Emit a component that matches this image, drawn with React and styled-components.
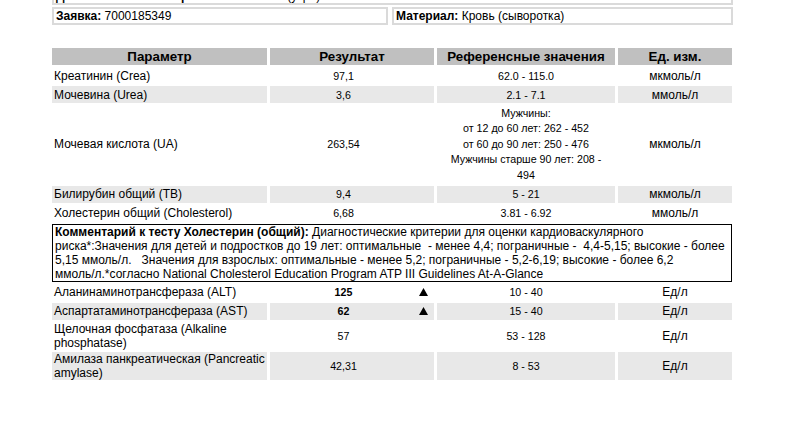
import React from 'react';
import styled, { createGlobalStyle } from 'styled-components';

const Global = createGlobalStyle`
  html, body { margin: 0; padding: 0; background: #fff; }
  body { font-family: "Liberation Sans", Arial, sans-serif; color: #000; }
`;

const Page = styled.div`
  width: 686px;
  padding-left: 49px;
`;

const InfoGrid = styled.div`
  display: grid;
  grid-template-columns: 336px 341px;
  column-gap: 4px;
  row-gap: 2px;
  margin: -13px 3px 0 3px;
`;

const InfoBox = styled.div`
  grid-column: ${(p) => (p.$wide ? '1 / span 2' : 'auto')};
  border: 2px solid #dadada;
  height: 14px;
  padding: 0 2px;
  font-size: 12px;
  line-height: 14px;
  white-space: nowrap;
  overflow: hidden;
`;

const Label = styled.b`
  font-weight: bold;
`;

const NoWrap = styled.span`
  white-space: nowrap;
`;

const Table = styled.table`
  margin-top: 21px;
  border-collapse: separate;
  border-spacing: 3px 2px;
  width: 686px;
  table-layout: fixed;
`;

const Th = styled.th`
  background: #c0c0c0;
  font-size: 13.33px;
  font-weight: bold;
  line-height: 15px;
  padding: 1px 2px;
  text-align: center;
`;

const Td = styled.td`
  background: ${(p) => (p.$shaded ? '#e8e8e8' : '#fff')};
  height: 17px;
  padding: 0 2px;
  vertical-align: middle;
  text-align: ${(p) => (p.$left ? 'left' : 'center')};
  font-size: ${(p) => (p.$small ? '10.67px' : '12px')};
  line-height: 14px;
`;

const ValueWrap = styled.div`
  display: flex;
  align-items: center;
`;

const Value = styled.span`
  flex: 1;
  text-align: center;
  font-weight: ${(p) => (p.$bold ? 'bold' : 'normal')};
`;

const Flag = styled.span`
  width: 17px;
  height: 13px;
  display: flex;
  align-items: center;
  justify-content: center;
`;

const RefLines = styled.div`
  max-width: 160px;
  margin: 0 auto;
  padding: 0.5px 0;
  line-height: 15.6px;
`;

const CommentCell = styled.td`
  border: 1px solid #000;
  padding: 0 2px;
  font-size: 12px;
  line-height: 14px;
  text-align: left;
  white-space: pre-wrap;
`;

const UpArrow = () => (
  <svg width="9" height="8" viewBox="0 0 9 8" aria-hidden="true">
    <polygon points="4.5,0 9,8 0,8" fill="#000" />
  </svg>
);

const rows = [
  { name: 'Креатинин (Crea)', value: '97,1', ref: '62.0 - 115.0', unit: 'мкмоль/л' },
  { name: 'Мочевина (Urea)', value: '3,6', ref: '2.1 - 7.1', unit: 'ммоль/л' },
  {
    name: 'Мочевая кислота (UA)',
    value: '263,54',
    refLines: ['Мужчины:', 'от 12 до 60 лет: 262 - 452', 'от 60 до 90 лет: 250 - 476', 'Мужчины старше 90 лет: 208 - 494'],
    unit: 'мкмоль/л',
  },
  { name: 'Билирубин общий (TB)', value: '9,4', ref: '5 - 21', unit: 'мкмоль/л' },
  { name: 'Холестерин общий (Cholesterol)', value: '6,68', ref: '3.81 - 6.92', unit: 'ммоль/л' },
];

const rows2 = [
  { name: 'Аланинаминотрансфераза (ALT)', value: '125', high: true, ref: '10 - 40', unit: 'Ед/л' },
  { name: 'Аспартатаминотрансфераза (AST)', value: '62', high: true, ref: '15 - 40', unit: 'Ед/л' },
  { name: 'Щелочная фосфатаза (Alkaline phosphatase)', value: '57', ref: '53 - 128', unit: 'Ед/л' },
  { name: 'Амилаза панкреатическая (Pancreatic amylase)', value: '42,31', ref: '8 - 53', unit: 'Ед/л' },
];

const commentA =
  'Диагностические критерии для оценки кардиоваскулярного риска*:Значения для детей и подростков до 19 лет: оптимальные  - менее 4,4; пограничные -  4,4-5,15; высокие - более 5,15 ммоль/л.   Значения для взрослых: оптимальные - менее 5,2; пограничные - 5,2-6,19; высокие - более 6,2 ';
const commentB = 'ммоль/л.*согласно';
const commentC = ' National Cholesterol Education Program ATP III Guidelines At-A-Glance';

function ResultRow({ row, shaded }) {
  return (
    <tr>
      <Td $left $shaded={shaded}>{row.name}</Td>
      <Td $small $shaded={shaded}>
        <ValueWrap>
          <Value $bold={row.high}>{row.value}</Value>
          <Flag>{row.high ? <UpArrow /> : null}</Flag>
        </ValueWrap>
      </Td>
      <Td $small $shaded={shaded}>
        {row.refLines ? (
          <RefLines>
            {row.refLines.map((l) => (
              <div key={l}>{l}</div>
            ))}
          </RefLines>
        ) : (
          row.ref
        )}
      </Td>
      <Td $shaded={shaded}>{row.unit}</Td>
    </tr>
  );
}

export default function App() {
  return (
    <>
      <Global />
      <Page>
        <InfoGrid>
          <InfoBox $wide>
            <Label>Дата взятия биоматериала:</Label> 14.06.2023 (утро)
          </InfoBox>
          <InfoBox>
            <Label>Заявка:</Label> 7000185349
          </InfoBox>
          <InfoBox>
            <Label>Материал:</Label> Кровь (сыворотка)
          </InfoBox>
        </InfoGrid>
        <Table>
          <colgroup>
            <col style={{ width: 215 }} />
            <col style={{ width: 164 }} />
            <col style={{ width: 178 }} />
            <col style={{ width: 114 }} />
          </colgroup>
          <thead>
            <tr>
              <Th>Параметр</Th>
              <Th>Результат</Th>
              <Th>Референсные значения</Th>
              <Th>Ед. изм.</Th>
            </tr>
          </thead>
          <tbody>
            {rows.map((r, i) => (
              <ResultRow key={r.name} row={r} shaded={i % 2 === 1} />
            ))}
            <tr>
              <CommentCell colSpan={4}>
                <Label>Комментарий к тесту Холестерин (общий):</Label> {commentA}
                <NoWrap>{commentB}</NoWrap>
                {commentC}
              </CommentCell>
            </tr>
            {rows2.map((r, i) => (
              <ResultRow key={r.name} row={r} shaded={i % 2 === 1} />
            ))}
          </tbody>
        </Table>
      </Page>
    </>
  );
}
